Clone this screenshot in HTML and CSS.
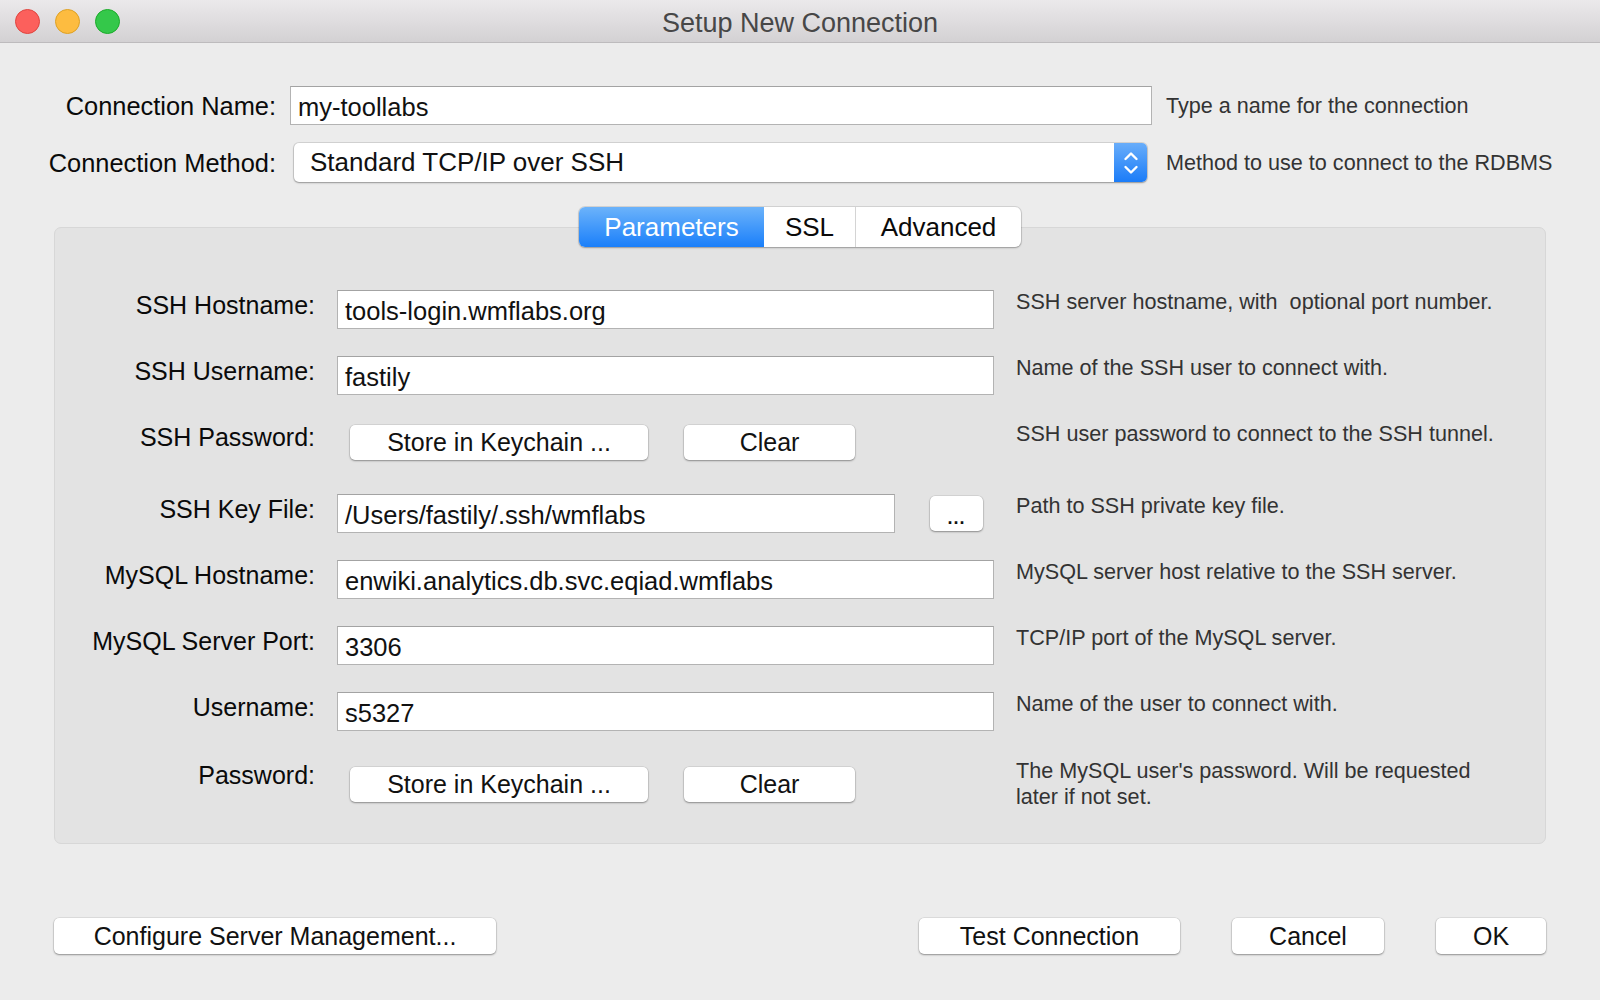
FILE: index.html
```html
<!DOCTYPE html>
<html lang="en">
<head>
    <meta charset="UTF-8">
    <title>Setup New Connection</title>
    <link rel="stylesheet" href="styles.css">
</head>
<body>
    <div class="window">
        <!-- Title bar -->
        <header class="titlebar">
            <div class="lights">
                <span class="light red"></span>
                <span class="light yellow"></span>
                <span class="light green"></span>
            </div>
            <div class="title">Setup New Connection</div>
            <div></div>
        </header>

        <!-- Connection name / method -->
        <div class="top-grid">
            <div class="label">Connection Name:</div>
            <div class="textfield">my-toollabs</div>
            <div class="top-help">Type a name for the connection</div>

            <div class="label">Connection Method:</div>
            <div class="select">
                <span class="select-text">Standard TCP/IP over SSH</span>
                <span class="stepper">
                    <svg width="18" height="28" viewBox="0 0 18 28">
                        <path d="M3.5 10 L9 4.5 L14.5 10" fill="none" stroke="#fff" stroke-width="2.4" stroke-linecap="round" stroke-linejoin="round"/>
                        <path d="M3.5 18 L9 23.5 L14.5 18" fill="none" stroke="#fff" stroke-width="2.4" stroke-linecap="round" stroke-linejoin="round"/>
                    </svg>
                </span>
            </div>
            <div class="top-help">Method to use to connect to the RDBMS</div>
        </div>

        <!-- Parameters box -->
        <section class="group">
            <div class="tabs">
                <div class="tab active tab-params">Parameters</div>
                <div class="tab tab-ssl">SSL</div>
                <div class="tab tab-adv">Advanced</div>
            </div>

            <div class="params">
                <div class="row">
                    <div class="row-label">SSH Hostname:</div>
                    <div class="textfield">tools-login.wmflabs.org</div>
                    <div class="help">SSH server hostname, with&nbsp; optional port number.</div>
                </div>
                <div class="row">
                    <div class="row-label">SSH Username:</div>
                    <div class="textfield">fastily</div>
                    <div class="help">Name of the SSH user to connect with.</div>
                </div>
                <div class="row row-buttons">
                    <div class="row-label">SSH Password:</div>
                    <div class="btn-pair">
                        <button class="btn btn-store">Store in Keychain ...</button>
                        <button class="btn btn-clear">Clear</button>
                    </div>
                    <div class="help">SSH user password to connect to the SSH tunnel.</div>
                </div>
                <div class="row">
                    <div class="row-label">SSH Key File:</div>
                    <div class="file-field">
                        <div class="textfield">/Users/fastily/.ssh/wmflabs</div>
                        <button class="btn btn-dots">...</button>
                    </div>
                    <div class="help">Path to SSH private key file.</div>
                </div>
                <div class="row">
                    <div class="row-label">MySQL Hostname:</div>
                    <div class="textfield">enwiki.analytics.db.svc.eqiad.wmflabs</div>
                    <div class="help">MySQL server host relative to the SSH server.</div>
                </div>
                <div class="row">
                    <div class="row-label">MySQL Server Port:</div>
                    <div class="textfield">3306</div>
                    <div class="help">TCP/IP port of the MySQL server.</div>
                </div>
                <div class="row">
                    <div class="row-label">Username:</div>
                    <div class="textfield">s5327</div>
                    <div class="help">Name of the user to connect with.</div>
                </div>
                <div class="row row-buttons last">
                    <div class="row-label">Password:</div>
                    <div class="btn-pair">
                        <button class="btn btn-store">Store in Keychain ...</button>
                        <button class="btn btn-clear">Clear</button>
                    </div>
                    <div class="help two-line">The MySQL user's password. Will be requested later if not set.</div>
                </div>
            </div>
        </section>

        <!-- Bottom buttons -->
        <footer class="actions">
            <button class="btn btn-configure">Configure Server Management...</button>
            <div class="actions-right">
                <button class="btn btn-test">Test Connection</button>
                <button class="btn btn-cancel">Cancel</button>
                <button class="btn btn-ok">OK</button>
            </div>
        </footer>
    </div>
</body>
</html>
```

FILE: styles.css
```css
body {
    margin: 0;
    padding: 0;
    background: #ececec;
    font-family: 'Liberation Sans', Arial, sans-serif;
    color: #111;
}
.window {
    width: 1600px;
    height: 1000px;
    background: #ececec;
    overflow: hidden;
}

/* Title bar */
.titlebar {
    height: 42px;
    display: grid;
    grid-template-columns: 1fr auto 1fr;
    align-items: center;
    background: linear-gradient(#ebe9eb, #d3d1d3);
    border-bottom: 1px solid #bdbbbd;
}
.lights {
    display: flex;
    gap: 15px;
    padding-left: 15px;
}
.light {
    width: 23px;
    height: 23px;
    border-radius: 50%;
    border: 1px solid;
}
.red { background: #fc605c; border-color: #e0443e; }
.yellow { background: #fdbc40; border-color: #dea123; }
.green { background: #34c84a; border-color: #1aab29; }
.title {
    font-size: 27px;
    color: #474747;
    padding-top: 4px;
}

/* Connection name / method */
.top-grid {
    display: grid;
    grid-template-columns: 276px 862px 1fr;
    grid-template-rows: 39px 39px;
    column-gap: 14px;
    row-gap: 18px;
    align-items: center;
    margin-top: 43px;
}
.label {
    font-size: 25.4px;
    text-align: right;
    color: #0a0a0a;
    padding-top: 2px;
}
.top-help {
    font-size: 21.6px;
    color: #333;
    padding-top: 1px;
}
.textfield {
    height: 39px;
    box-sizing: border-box;
    background: #fff;
    border: 1px solid #b3b3b3;
    border-top-color: #a3a3a3;
    font-size: 25.5px;
    line-height: 37px;
    padding-left: 7px;
    padding-top: 2px;
    color: #111;
    white-space: nowrap;
    overflow: hidden;
}
.select {
    height: 39px;
    margin: 0 5px 0 4px;
    display: flex;
    align-items: center;
    justify-content: space-between;
    background: #fff;
    border-radius: 5px;
    box-shadow: 0 0 0 1px rgba(0, 0, 0, 0.1), 0 1px 2px rgba(0, 0, 0, 0.3);
}
.select-text {
    font-size: 26px;
    padding-left: 16px;
    color: #111;
}
.stepper {
    width: 33px;
    height: 39px;
    border-radius: 0 5px 5px 0;
    background: linear-gradient(#68adfa, #1b7cf8);
    display: flex;
    align-items: center;
    justify-content: center;
}

/* Parameters box */
.group {
    margin: 45px 54px 0;
    height: 617px;
    box-sizing: border-box;
    background: #e3e3e3;
    border: 1px solid #d7d7d7;
    border-radius: 7px;
}
.tabs {
    display: flex;
    width: max-content;
    margin: -21px auto 0;
    height: 40px;
    background: #fff;
    border-radius: 6px;
    box-shadow: 0 0 0 1px rgba(0, 0, 0, 0.1), 0 1px 2px rgba(0, 0, 0, 0.25);
}
.tab {
    display: flex;
    align-items: center;
    justify-content: center;
    font-size: 26px;
    color: #0a0a0a;
}
.tab-params { width: 185px; }
.tab-ssl { width: 91px; border-right: 1px solid #d4d4d4; }
.tab-adv { width: 165px; }
.tab.active {
    color: #fff;
    background: linear-gradient(#6cb3fa, #1a7ffa);
    border-radius: 6px 0 0 6px;
}

.params {
    margin-top: 43px;
}
.row {
    display: grid;
    grid-template-columns: 260px 657px 1fr;
    column-gap: 22px;
    align-items: start;
    min-height: 39px;
    margin-bottom: 27px;
}
.row-buttons {
    min-height: 45px;
}
.row.last {
    margin-top: 29px;
    margin-bottom: 0;
}
.row-label {
    font-size: 25px;
    line-height: 31px;
    text-align: right;
    color: #0a0a0a;
}
.help {
    font-size: 21.6px;
    line-height: 24px;
    color: #333;
}
.help.two-line {
    width: 460px;
    line-height: 26px;
    margin-top: -2px;
}

.btn {
    font-family: 'Liberation Sans', Arial, sans-serif;
    font-size: 25px;
    color: #111;
    background: #fff;
    border: none;
    border-radius: 5px;
    box-shadow: 0 0 0 0.5px rgba(0, 0, 0, 0.12), 0 1px 2px rgba(0, 0, 0, 0.35);
    height: 35px;
    padding: 0;
}
.btn-pair {
    display: flex;
    gap: 36px;
    padding: 3px 0 0 13px;
}
.last .btn-pair {
    padding-top: 7px;
}
.btn-store { width: 298px; }
.btn-clear { width: 171px; }

.file-field {
    display: flex;
    align-items: start;
}
.file-field .textfield {
    width: 558px;
}
.btn-dots {
    width: 53px;
    height: 35px;
    margin: 2px 0 0 35px;
    font-size: 18px;
    font-weight: bold;
    padding-top: 10px;
    letter-spacing: 1px;
}

/* Bottom buttons */
.actions {
    display: flex;
    justify-content: space-between;
    margin: 74px 54px 0;
}
.actions-right {
    display: flex;
    gap: 52px;
}
.actions .btn { height: 36px; }
.btn-configure { width: 442px; }
.btn-test { width: 261px; }
.btn-cancel { width: 152px; }
.btn-ok { width: 110px; }
```
